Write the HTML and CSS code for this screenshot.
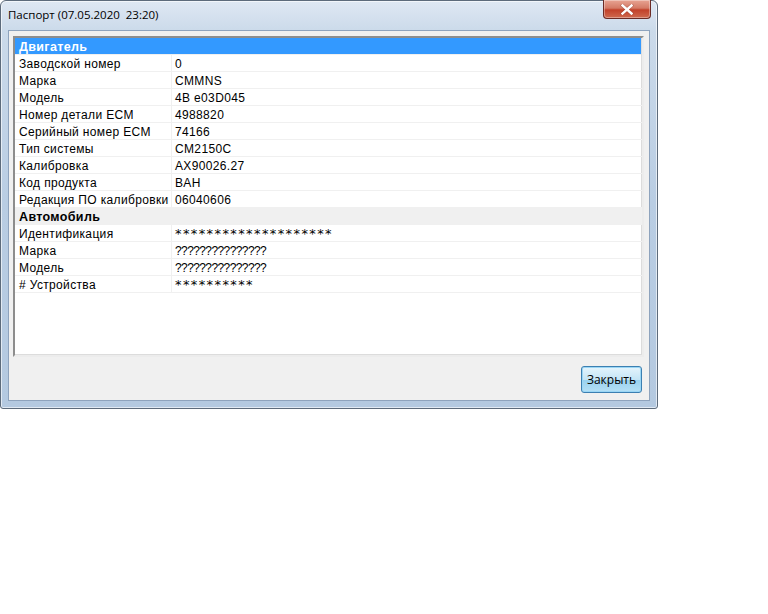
FILE: index.html
```html
<!DOCTYPE html>
<html>
<head>
<meta charset="utf-8">
<link rel="stylesheet" href="styles.css">
</head>
<body>
<div class="window">
  <div class="titlebar">
    <span class="title">Паспорт (07.05.2020&nbsp;&nbsp;23:20)</span>
    <div class="close"><svg width="14" height="11" viewBox="0 0 14 11"><path d="M2.5 1.5 L11.5 9.5 M11.5 1.5 L2.5 9.5" stroke="#7a2a20" stroke-width="3.6" stroke-linecap="square" opacity="0.35"/><path d="M2.5 1.5 L11.5 9.5 M11.5 1.5 L2.5 9.5" stroke="#fff" stroke-width="2.4" stroke-linecap="square"/></svg></div>
  </div>
  <div class="client">
    <div class="list">
      <div class="row group active"><div class="cell span">Двигатель</div></div>
      <div class="row"><div class="cell">Заводской номер</div><div class="cell val">0</div></div>
      <div class="row"><div class="cell">Марка</div><div class="cell val">CMMNS</div></div>
      <div class="row"><div class="cell">Модель</div><div class="cell val">4B e03D045</div></div>
      <div class="row"><div class="cell">Номер детали ECM</div><div class="cell val">4988820</div></div>
      <div class="row"><div class="cell">Серийный номер ECM</div><div class="cell val">74166</div></div>
      <div class="row"><div class="cell">Тип системы</div><div class="cell val">CM2150C</div></div>
      <div class="row"><div class="cell">Калибровка</div><div class="cell val">AX90026.27</div></div>
      <div class="row"><div class="cell">Код продукта</div><div class="cell val">BAH</div></div>
      <div class="row"><div class="cell">Редакция ПО калибровки</div><div class="cell val">06040606</div></div>
      <div class="row group"><div class="cell span">Автомобиль</div></div>
      <div class="row"><div class="cell">Идентификация</div><div class="cell val stars">********************</div></div>
      <div class="row"><div class="cell">Марка</div><div class="cell val marks">???????????????</div></div>
      <div class="row"><div class="cell">Модель</div><div class="cell val marks">???????????????</div></div>
      <div class="row"><div class="cell">#&nbsp;Устройства</div><div class="cell val stars">**********</div></div>
    </div>
    <div class="footer">
      <button class="btn">Закрыть</button>
    </div>
  </div>
</div>
</body>
</html>
```
FILE: styles.css
```css
html, body {
  margin: 0;
  padding: 0;
  background: #ffffff;
}
.window {
  width: 656px;
  height: 407px;
  border: 1px solid #5d6b7b;
  border-radius: 6px 6px 3px 3px;
  background: linear-gradient(to bottom, #dfe8f3 0px, #cbdaea 30px, #b9cde3 200px, #b4c9e0 100%);
  box-shadow: inset 0 0 0 1px rgba(255,255,255,0.6);
  display: flex;
  flex-direction: column;
  font-family: "Liberation Sans", Arial, sans-serif;
}
.titlebar {
  height: 29px;
  display: flex;
  align-items: flex-start;
  justify-content: space-between;
  padding-left: 7px;
  padding-right: 5px;
}
.title {
  margin-top: 6px;
  font-family: "Open Sans", "Liberation Sans", sans-serif;
  font-size: 11.5px;
  color: #000;
}
.close {
  width: 46px;
  height: 18px;
  margin-top: -1px;
  margin-right: 1px;
  border: 1px solid #6b2b25;
  border-top: none;
  border-radius: 0 0 4px 4px;
  background: linear-gradient(to bottom, #e8a493 0%, #d47a66 45%, #c2412a 55%, #cf6a4f 100%);
  box-shadow: inset 0 0 0 1px rgba(255,255,255,0.35);
  display: flex;
  align-items: center;
  justify-content: center;
}
.client {
  flex: 1;
  margin: 0 7px 7px 7px;
  border: 1px solid #8ea3bd;
  background: #f0f0f0;
  display: flex;
  flex-direction: column;
  padding: 5px 5px 0 4px;
}
.list {
  height: 317px;
  background: #fff;
  border-top: 2px solid #8d8d8d;
  border-left: 2px solid #8d8d8d;
  border-right: 2px solid #ececec;
  border-bottom: 2px solid #ececec;
  box-shadow: inset -1px -1px 0 #dcdcdc;
}
.row {
  display: grid;
  grid-template-columns: 156px 1fr;
  height: 17px;
  border-bottom: 1px solid #f0f0f0;
  box-sizing: border-box;
  font-size: 12px;
  letter-spacing: 0.35px;
  color: #000;
}
.row .cell {
  padding-left: 4px;
  padding-top: 1px;
  line-height: 16px;
  white-space: nowrap;
  overflow: hidden;
}
.row .val {
  border-left: 1px solid #f0f0f0;
  padding-left: 3px;
}
.row .stars {
  font-family: "DejaVu Sans", sans-serif;
  font-size: 13px;
  letter-spacing: 1.4px;
  line-height: 15px;
}
.row .marks {
  letter-spacing: -0.6px;
}
.row .span {
  grid-column: 1 / 3;
  font-weight: bold;
  font-size: 12.5px;
}
.group {
  background: #f0f0f0;
}
.group.active {
  background: #3399ff;
  color: #fff;
  margin-right: 1px;
}
.footer {
  flex: 1;
  display: flex;
  justify-content: flex-end;
  align-items: flex-start;
  padding-top: 9px;
  padding-right: 2px;
}
.btn {
  width: 61px;
  height: 27px;
  border: 1px solid #3c7fb1;
  border-radius: 3px;
  background: linear-gradient(to bottom, #e5f4fc 0%, #c4e5f6 50%, #98d1ef 51%, #b5e0f5 100%);
  box-shadow: inset 0 0 0 1px #9ad6f5;
  font-family: "Open Sans", "Liberation Sans", sans-serif;
  font-size: 12px;
  color: #000;
  padding: 0;
}
```
